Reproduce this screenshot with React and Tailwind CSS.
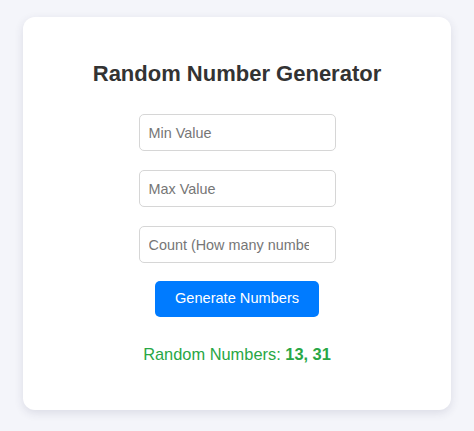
export default function App() {
  return (
    <div
      className="min-h-[431px] bg-[#f4f5fa] pt-[17px] px-[23px] pb-[21px]"
      style={{ fontFamily: '"Liberation Sans", Arial, sans-serif' }}
    >
      <div className="w-[428px] h-[393px] bg-white rounded-[12px] shadow-[0_3px_10px_rgba(40,40,80,0.12)] flex flex-col items-center pt-[46px]">
        <h1 className="text-[22px] leading-[22px] font-bold text-[#333333]">
          Random Number Generator
        </h1>
        <div className="mt-[29px] flex flex-col gap-[19px]">
          <input
            type="number"
            placeholder="Min Value"
            className="w-[197px] h-[37px] border border-[#d6d6d6] rounded-[5px] pl-[9px] pr-[11px] text-[14.4px] text-[#333] placeholder:text-[#767676] outline-none [appearance:textfield]"
          />
          <input
            type="number"
            placeholder="Max Value"
            className="w-[197px] h-[37px] border border-[#d6d6d6] rounded-[5px] pl-[9px] pr-[11px] text-[14.4px] text-[#333] placeholder:text-[#767676] outline-none [appearance:textfield]"
          />
          <input
            type="number"
            placeholder="Count (How many numbers)"
            className="w-[197px] h-[37px] border border-[#d6d6d6] rounded-[5px] pl-[9px] pr-[11px] text-[14.4px] text-[#333] placeholder:text-[#767676] outline-none [appearance:textfield]"
          />
        </div>
        <button className="mt-[18px] w-[164px] h-[36px] bg-[#007bff] text-white rounded-[5px] text-[14.6px]">
          Generate Numbers
        </button>
        <p className="mt-[28px] text-[16.4px] leading-[19px] text-[#28a745]">
          Random Numbers: <span className="font-bold">13, 31</span>
        </p>
      </div>
    </div>
  );
}
